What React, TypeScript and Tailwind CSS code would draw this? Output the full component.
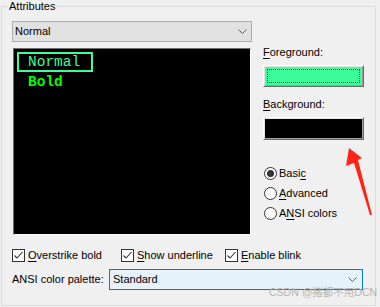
import React from "react";

function Chevron() {
  return (
    <svg width="9" height="5" viewBox="0 0 9 5" className="block">
      <polyline points="0.5,0.5 4.5,4.5 8.5,0.5" fill="none" stroke="#606060" strokeWidth="1" />
    </svg>
  );
}

function CheckBox({ children, w }: { children: React.ReactNode; w: string }) {
  return (
    <div className={`flex items-center ${w}`}>
      <div className="w-[13px] h-[13px] border border-[#333333] bg-white flex items-center justify-center">
        <svg width="11" height="11" viewBox="0 0 11 11" className="block">
          <polyline points="1.5,5.5 4,8 9.5,2" fill="none" stroke="#333333" strokeWidth="1.1" />
        </svg>
      </div>
      <span className="ml-[3px] leading-[16px]">{children}</span>
    </div>
  );
}

function Radio({ checked, children }: { checked?: boolean; children: React.ReactNode }) {
  return (
    <div className="h-[20px] flex items-center">
      <div className="ml-[1px] w-[13px] h-[13px] rounded-full border border-[#333333] bg-white flex items-center justify-center">
        {checked ? <div className="w-[7px] h-[7px] rounded-full bg-[#333333]" /> : null}
      </div>
      <span className="ml-[2px]">{children}</span>
    </div>
  );
}

export default function App() {
  return (
    <div className="relative w-[380px] h-[307px] bg-[#f0f0f0] overflow-hidden text-[11px] text-black font-['Liberation_Sans',sans-serif]">
      <div className="relative ml-[1px] mt-[6px] w-[375px] h-[300px] border border-[#dcdcdc]">
        <span className="absolute left-[6px] top-[-8px] px-[1px] leading-[14px] bg-[#f0f0f0]">Attributes</span>
        <div className="flex flex-col pl-[10px] pt-[14px]">
          <div className="flex">
            <div className="flex flex-col w-[240px]">
              <div className="h-[21px] border border-[#adadad] bg-[#e1e1e1] flex items-center justify-between pl-[2px] pr-[4px]">
                <span>Normal</span>
                <Chevron />
              </div>
              <div className="mt-[6px] ml-[1px] w-[238px] h-[187px] bg-black border border-t-[#6d6d6d] border-l-[#6d6d6d] border-r-white border-b-white">
                <div className="flex flex-col pl-[3px] pt-[3px] font-['Liberation_Mono',monospace] text-[14.5px]">
                  <div className="self-start h-[20px] border-2 border-[#3dfc9b] pl-[9px] pr-[11px] flex items-center text-[#3dfc9b] leading-[16px]">
                    Normal
                  </div>
                  <div className="h-[20px] pl-[11px] flex items-center text-[#00ff00] font-bold leading-[16px]">Bold</div>
                </div>
              </div>
            </div>
            <div className="ml-[11px] flex flex-col w-[101px]">
              <div className="mt-[24px] leading-[15px]">
                <span className="underline underline-offset-2">F</span>oreground:
              </div>
              <div className="mt-[5px] h-[22px] w-[101px] border border-t-white border-l-white border-r-[#696969] border-b-[#696969]">
                <div className="h-full w-full border border-t-[#e3e3e3] border-l-[#e3e3e3] border-r-[#a0a0a0] border-b-[#a0a0a0] bg-[#3dfc9b] p-[2px]">
                  <div className="h-full w-full border border-dotted border-[#c20364]" />
                </div>
              </div>
              <div className="mt-[10px] leading-[15px]">
                <span className="underline underline-offset-2">B</span>ackground:
              </div>
              <div className="mt-[5px] h-[23px] w-[101px] border border-t-white border-l-white border-r-[#696969] border-b-[#696969]">
                <div className="h-full w-full border border-t-[#e3e3e3] border-l-[#e3e3e3] border-r-[#a0a0a0] border-b-[#a0a0a0] bg-black" />
              </div>
              <div className="mt-[23px] flex flex-col">
                <Radio checked>
                  Basi<span className="underline underline-offset-2">c</span>
                </Radio>
                <Radio>
                  <span className="underline underline-offset-2">A</span>dvanced
                </Radio>
                <Radio>
                  A<span className="underline underline-offset-2">N</span>SI colors
                </Radio>
              </div>
            </div>
          </div>
          <div className="mt-[12px] flex items-center h-[16px]">
            <CheckBox w="w-[109px]">
              <span className="underline underline-offset-2">O</span>verstrike bold
            </CheckBox>
            <CheckBox w="w-[104px]">
              <span className="underline underline-offset-2">S</span>how underline
            </CheckBox>
            <CheckBox w="w-[120px]">
              <span className="underline underline-offset-2">E</span>nable blink
            </CheckBox>
          </div>
          <div className="mt-[6px] flex items-center">
            <div className="w-[97px]">ANSI color palette:</div>
            <div className="w-[254px] h-[21px] border border-[#0078d7] bg-[#e5f1fb] flex items-center justify-between pl-[3px] pr-[5px]">
              <span>Standard</span>
              <Chevron />
            </div>
          </div>
        </div>
      </div>
      <svg className="absolute left-[340px] top-[144px]" width="40" height="76" viewBox="0 0 40 76">
        <polygon points="9,4 22,14 18,16 32,71 30,71 14,19 6,22" fill="#ff2418" />
      </svg>
      <div className="absolute left-[269px] top-[286px] whitespace-nowrap text-[10.5px] leading-[12px] text-[#b4b4b4] font-['Liberation_Sans','Noto_Sans_CJK_SC',sans-serif]">
        CSDN @猪都不用DCN
      </div>
    </div>
  );
}
